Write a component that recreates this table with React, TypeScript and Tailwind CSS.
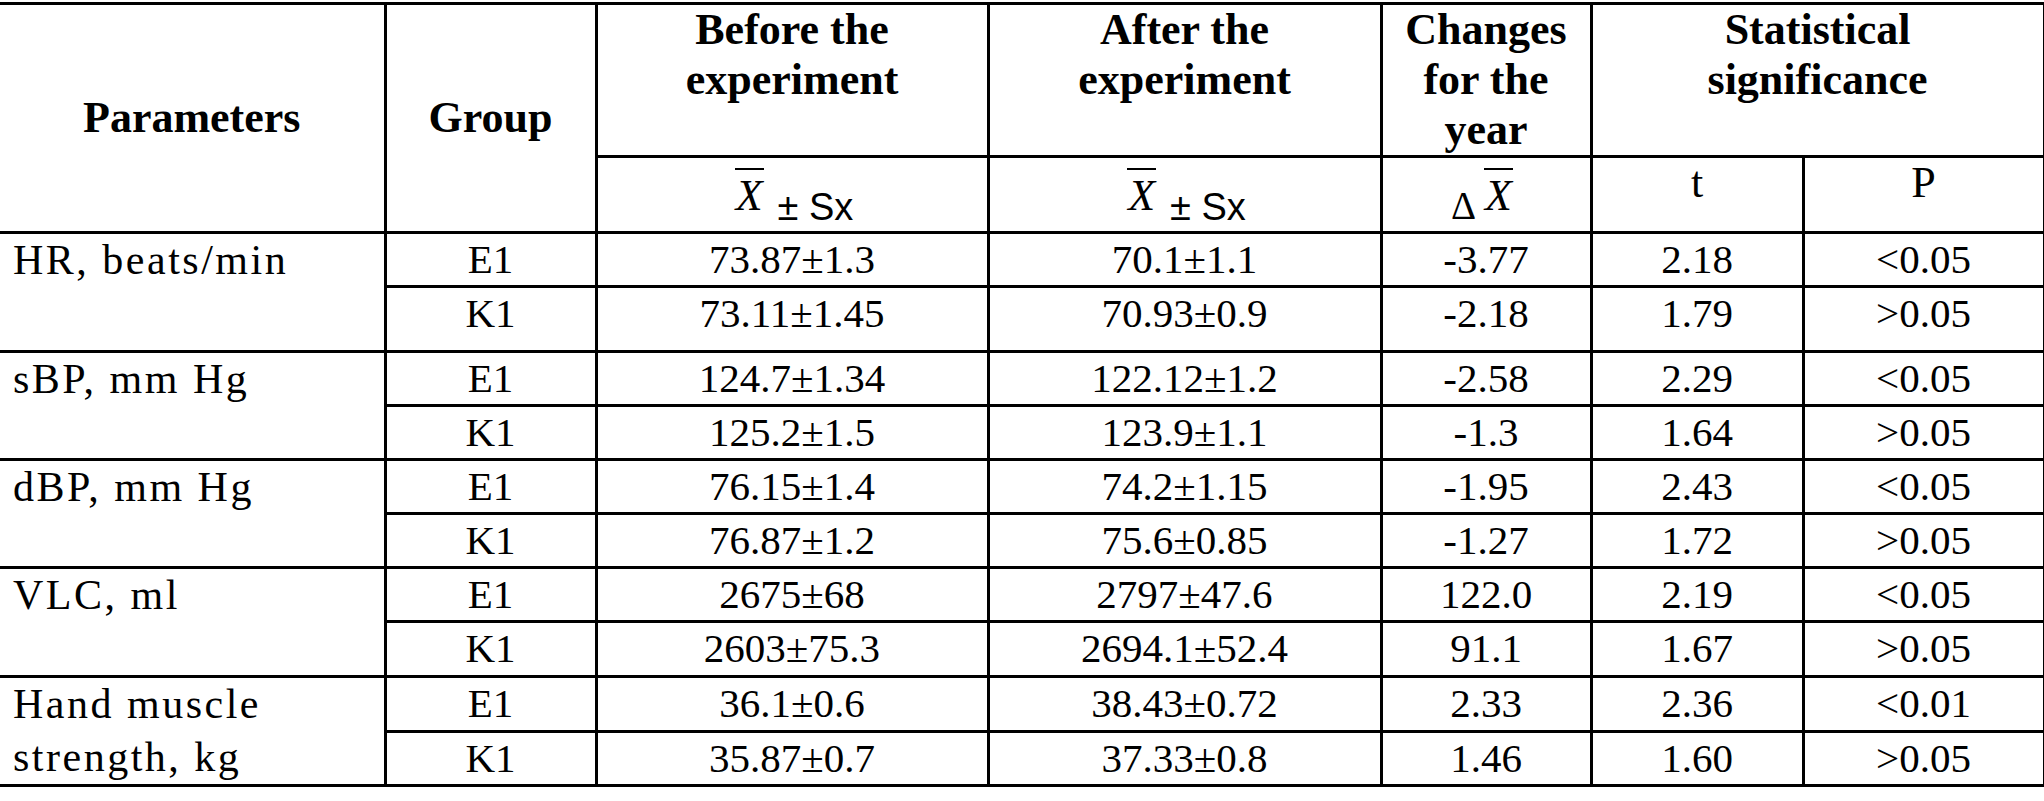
import React from "react";

const serif = "font-['Liberation_Serif',serif]";
const sans = "font-['Liberation_Sans',sans-serif]";

function Bar({ children }: { children: React.ReactNode }) {
  return (
    <span className={`${serif} italic text-[44px] leading-[44px] border-t-2 border-black pt-[4px] px-[1px]`}>{children}</span>
  );
}

function XPlusSx() {
  return (
    <div className="flex justify-center items-start pt-[10px] pl-[4px]">
      <Bar>X</Bar>
      <span className={`${sans} text-[38px] leading-[38px] mt-[20px] ml-[14px] whitespace-pre`}>± Sx</span>
    </div>
  );
}

function DeltaX() {
  return (
    <div className="flex justify-center items-start pt-[10px] pr-[8px]">
      <span className={`${serif} text-[39px] leading-[39px] mt-[18px] mr-[8px]`}>Δ</span>
      <Bar>X</Bar>
    </div>
  );
}

type Row = {
  g: string;
  b: string;
  a: string;
  c: string;
  t: string;
  p: string;
};

const groups: { label: React.ReactNode; rows: [Row, Row]; h: [string, string] }[] = [
  {
    label: "HR, beats/min",
    h: ["h-[54px]", "h-[65px]"],
    rows: [
      { g: "E1", b: "73.87±1.3", a: "70.1±1.1", c: "-3.77", t: "2.18", p: "<0.05" },
      { g: "K1", b: "73.11±1.45", a: "70.93±0.9", c: "-2.18", t: "1.79", p: ">0.05" },
    ],
  },
  {
    label: "sBP, mm Hg",
    h: ["h-[54px]", "h-[53px]"],
    rows: [
      { g: "E1", b: "124.7±1.34", a: "122.12±1.2", c: "-2.58", t: "2.29", p: "<0.05" },
      { g: "K1", b: "125.2±1.5", a: "123.9±1.1", c: "-1.3", t: "1.64", p: ">0.05" },
    ],
  },
  {
    label: "dBP, mm Hg",
    h: ["h-[54px]", "h-[54px]"],
    rows: [
      { g: "E1", b: "76.15±1.4", a: "74.2±1.15", c: "-1.95", t: "2.43", p: "<0.05" },
      { g: "K1", b: "76.87±1.2", a: "75.6±0.85", c: "-1.27", t: "1.72", p: ">0.05" },
    ],
  },
  {
    label: "VLC, ml",
    h: ["h-[54px]", "h-[55px]"],
    rows: [
      { g: "E1", b: "2675±68", a: "2797±47.6", c: "122.0", t: "2.19", p: "<0.05" },
      { g: "K1", b: "2603±75.3", a: "2694.1±52.4", c: "91.1", t: "1.67", p: ">0.05" },
    ],
  },
  {
    label: (
      <>
        Hand muscle
        <br />
        strength, kg
      </>
    ),
    h: ["h-[55px]", "h-[54px]"],
    rows: [
      { g: "E1", b: "36.1±0.6", a: "38.43±0.72", c: "2.33", t: "2.36", p: "<0.01" },
      { g: "K1", b: "35.87±0.7", a: "37.33±0.8", c: "1.46", t: "1.60", p: ">0.05" },
    ],
  },
];

const line = "border-[3px] border-black p-0";
const cell = `${line} align-top`;
const body = `${serif} text-[41px] leading-[51px] text-center whitespace-nowrap`;
const head = `${serif} font-bold text-[44px] leading-[50px] text-center`;

export default function App() {
  return (
    <div className="w-[2044px] h-[801px] bg-white text-black overflow-hidden">
      <table className="mt-[2px] w-[2044px] table-fixed border-collapse">
        <colgroup>
          <col className="w-[385px]" />
          <col className="w-[211px]" />
          <col className="w-[392px]" />
          <col className="w-[393px]" />
          <col className="w-[210px]" />
          <col className="w-[212px]" />
          <col className="w-[241px]" />
        </colgroup>
        <thead>
          <tr className="h-[152px]">
            <th rowSpan={2} className={`${line} border-l-0 align-middle ${head}`}>
              Parameters
            </th>
            <th rowSpan={2} className={`${line} align-middle ${head}`}>
              Group
            </th>
            <th className={`${cell} ${head}`}>
              Before the
              <br />
              experiment
            </th>
            <th className={`${cell} ${head}`}>
              After the
              <br />
              experiment
            </th>
            <th className={`${cell} ${head}`}>
              Changes
              <br />
              for the
              <br />
              year
            </th>
            <th colSpan={2} className={`${cell} ${head}`}>
              Statistical
              <br />
              significance
            </th>
          </tr>
          <tr className="h-[76px]">
            <th className={`${cell} font-normal`}>
              <XPlusSx />
            </th>
            <th className={`${cell} font-normal`}>
              <XPlusSx />
            </th>
            <th className={`${cell} font-normal`}>
              <DeltaX />
            </th>
            <th className={`${cell} font-normal ${serif} text-[44px] leading-[44px] pt-[3px]`}>t</th>
            <th className={`${cell} font-normal ${serif} text-[44px] leading-[44px] pt-[3px]`}>P</th>
          </tr>
        </thead>
        <tbody>
          {groups.map((grp, gi) =>
            grp.rows.map((r, ri) => (
              <tr key={`${gi}-${ri}`} className={grp.h[ri]}>
                {ri === 0 && (
                  <td
                    rowSpan={2}
                    className={`${cell} border-l-0 ${serif} text-[42px] leading-[53px] tracking-[2.5px] text-left pl-[13px] whitespace-nowrap`}
                  >
                    {grp.label}
                  </td>
                )}
                <td className={`${cell} ${body}`}>{r.g}</td>
                <td className={`${cell} ${body}`}>{r.b}</td>
                <td className={`${cell} ${body}`}>{r.a}</td>
                <td className={`${cell} ${body}`}>{r.c}</td>
                <td className={`${cell} ${body}`}>{r.t}</td>
                <td className={`${cell} ${body}`}>{r.p}</td>
              </tr>
            ))
          )}
        </tbody>
      </table>
    </div>
  );
}
